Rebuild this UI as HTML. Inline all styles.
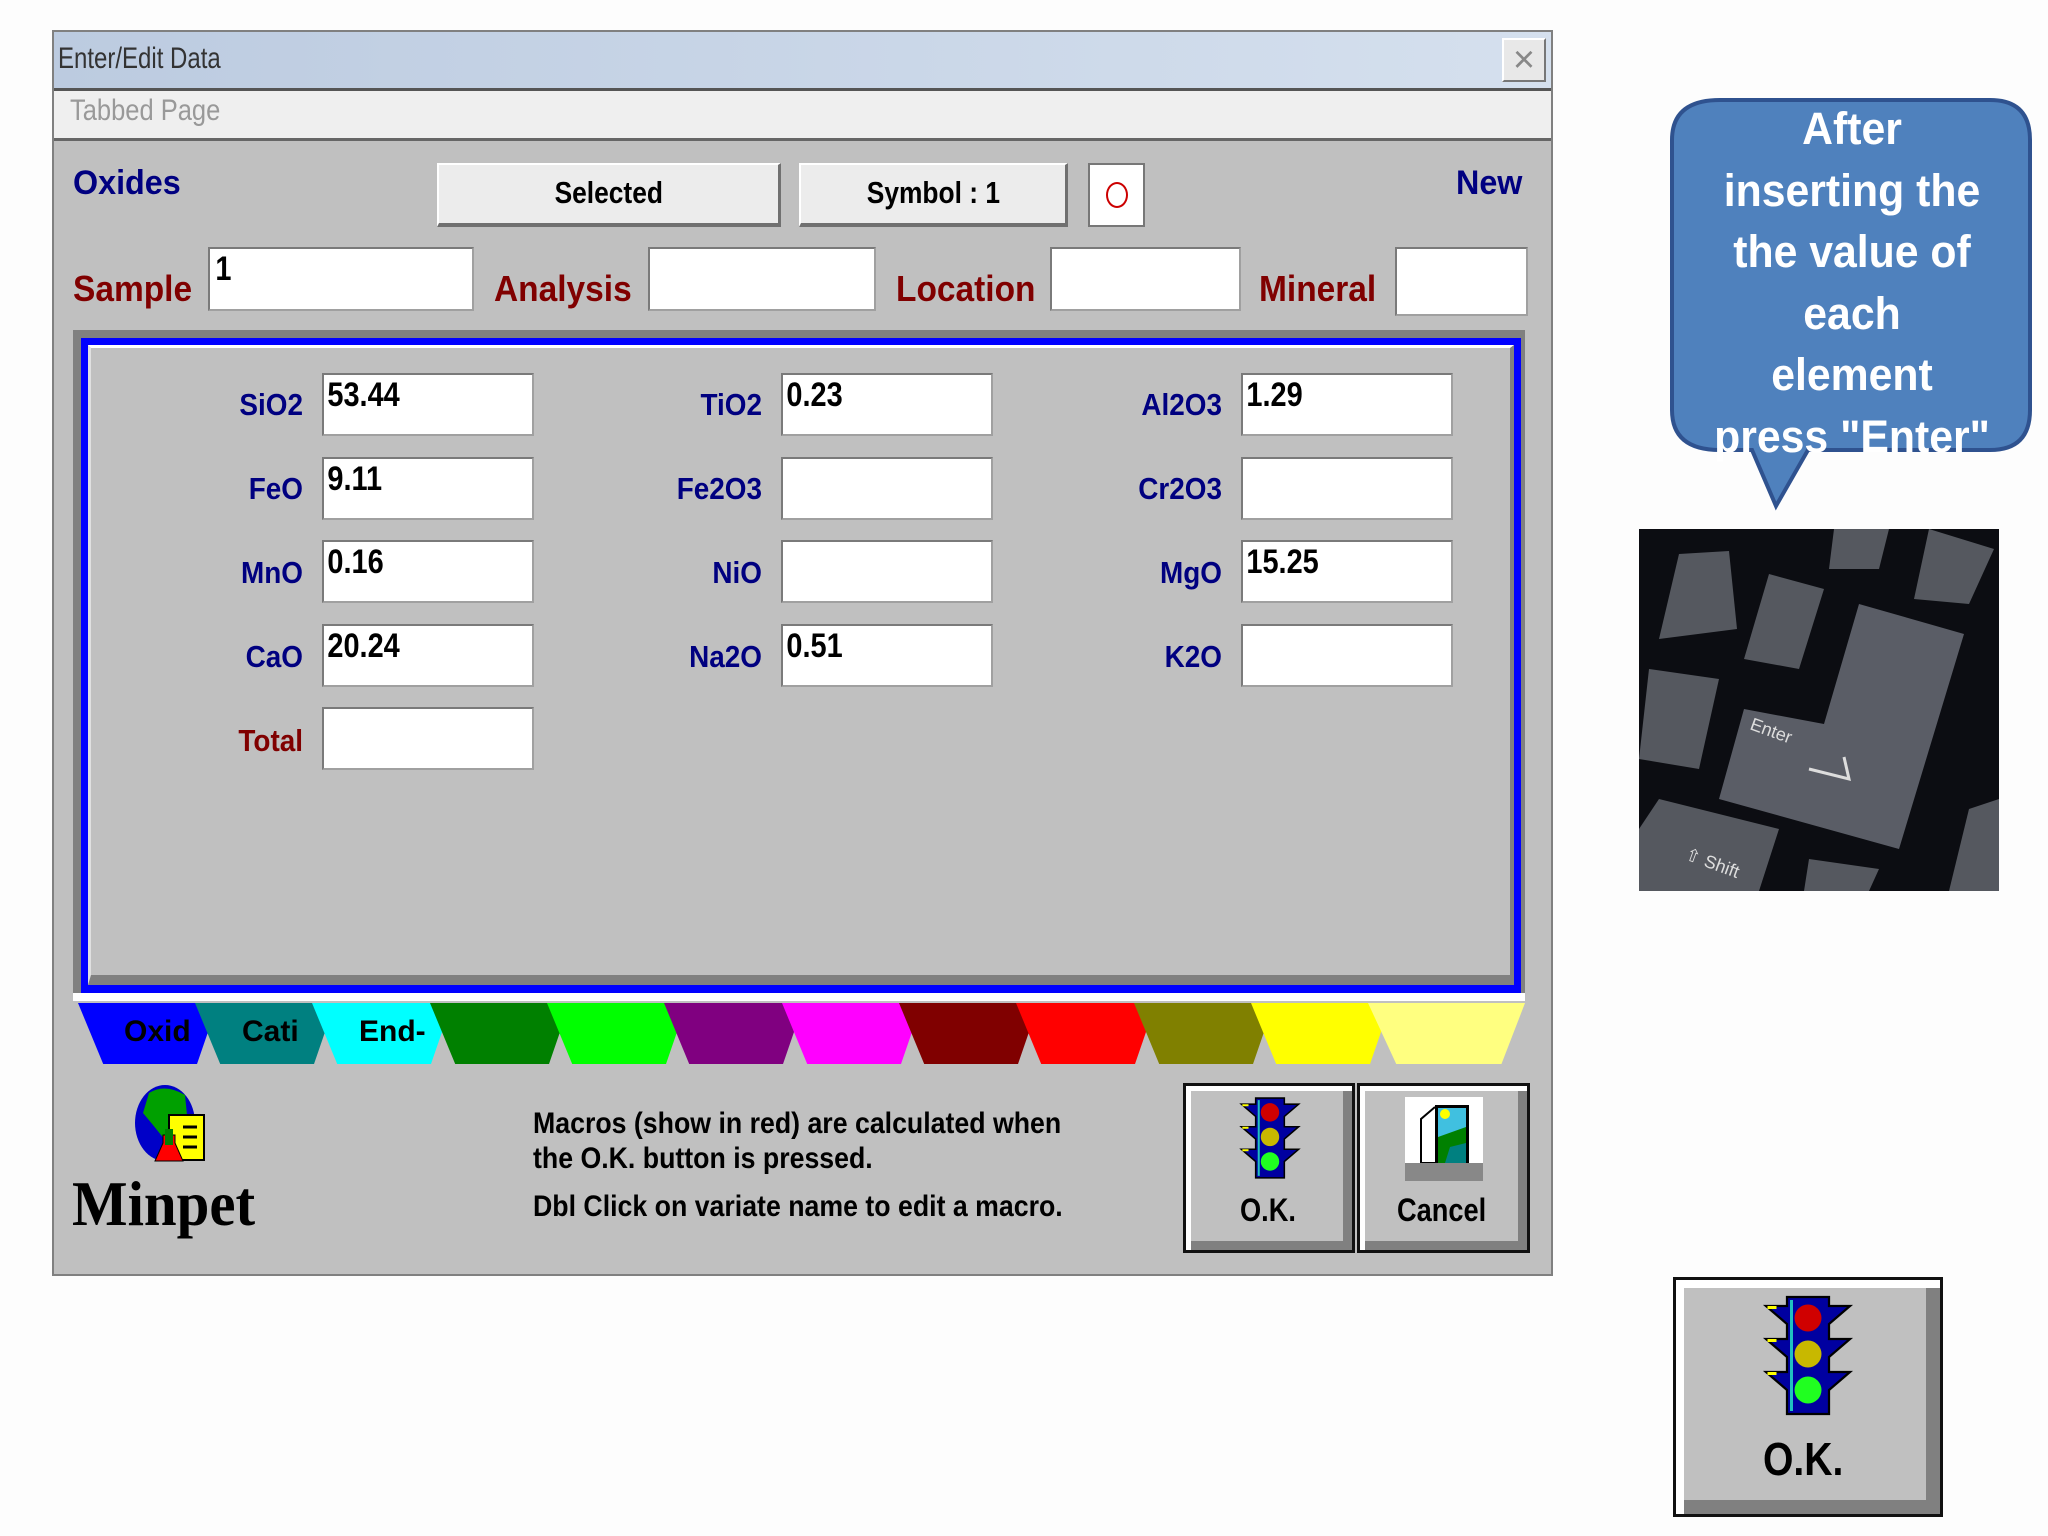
<!DOCTYPE html>
<html><head><meta charset="utf-8"><style>
*{margin:0;padding:0;box-sizing:border-box}
body{width:2048px;height:1536px;background:#fdfdfd;position:relative;overflow:hidden;font-family:"Liberation Sans",sans-serif}
.a{position:absolute}
.win{left:52px;top:30px;width:1501px;height:1246px;background:#c0c0c0;border:2px solid #808080}
.t{white-space:nowrap;font-family:"Liberation Sans",sans-serif;transform-origin:left center}
.in{background:#fff;border:2px solid #7a7a7a;border-right-color:#a0a0a0;border-bottom-color:#a0a0a0}
.btn{background:#ececec;border:2px solid #fff;border-right:3px solid #707070;border-bottom:4px solid #707070;text-align:center}
.lab{font-weight:bold;color:#000080;font-size:31px;text-align:right;width:160px;transform:scaleX(.9);transform-origin:right center}
.val{font-size:34px;font-weight:bold;padding-left:4px;line-height:40px;transform:scaleX(.85);transform-origin:left top}
.tab{top:1003px;height:61px;width:140px;clip-path:polygon(0 0,100% 0,85% 100%,18% 100%);font-size:30px;font-weight:bold;padding-left:46px;line-height:58px}
.bigbtn{background:#c0c0c0;border:3px solid #111;box-shadow:inset 5px 5px 0 #fff,inset -9px -9px 0 #808080}
.rl{font-size:36px;font-weight:bold;color:#800000;transform:scaleX(.93)}
</style></head><body>

<div class="a win"></div>
<div class="a" style="left:54px;top:32px;width:1497px;height:56px;background:linear-gradient(90deg,#bccbe0,#d5e0ee)"></div>
<div class="a t" style="left:58px;top:42px;font-size:30px;color:#333;transform:scaleX(.8)">Enter/Edit Data</div>
<div class="a" style="left:1502px;top:38px;width:44px;height:44px;background:#e8e8e8;border:2px solid #fff;border-right-color:#777;border-bottom-color:#777;color:#888;font-size:38px;line-height:40px;text-align:center">×</div>
<div class="a" style="left:54px;top:88px;width:1497px;height:3px;background:#555"></div>
<div class="a" style="left:54px;top:91px;width:1497px;height:48px;background:#efefef"></div>
<div class="a t" style="left:70px;top:94px;font-size:30px;color:#999;transform:scaleX(.85)">Tabbed Page</div>
<div class="a" style="left:54px;top:138px;width:1497px;height:3px;background:#666"></div>

<div class="a t" style="left:73px;top:164px;font-size:34px;color:#000080;font-weight:bold;transform:scaleX(.95)">Oxides</div>
<div class="a t" style="left:1456px;top:164px;font-size:34px;color:#000080;font-weight:bold;transform:scaleX(.95)">New</div>
<div class="a btn" style="left:437px;top:163px;width:344px;height:64px;font-size:31px;font-weight:bold;line-height:56px"><span style="display:inline-block;transform:scaleX(.85)">Selected</span></div>
<div class="a btn" style="left:799px;top:163px;width:269px;height:64px;font-size:31px;font-weight:bold;line-height:56px"><span style="display:inline-block;transform:scaleX(.85)">Symbol : 1</span></div>
<div class="a" style="left:1088px;top:163px;width:57px;height:64px;background:#fff;border:2px solid #777"><div class="a" style="left:16px;top:17px;width:22px;height:26px;border:2px solid #c00;border-radius:50%"></div></div>

<div class="a t rl" style="left:73px;top:268px">Sample</div>
<div class="a in" style="left:208px;top:247px;width:266px;height:64px"><span class="a val" style="left:2px;top:0">1</span></div>
<div class="a t rl" style="left:494px;top:268px">Analysis</div>
<div class="a in" style="left:648px;top:247px;width:228px;height:64px"></div>
<div class="a t rl" style="left:896px;top:268px">Location</div>
<div class="a in" style="left:1050px;top:247px;width:191px;height:64px"></div>
<div class="a t rl" style="left:1259px;top:268px">Mineral</div>
<div class="a in" style="left:1395px;top:247px;width:133px;height:69px"></div>

<div class="a" style="left:73px;top:330px;width:1452px;height:663px;background:#808080"></div>
<div class="a" style="left:81px;top:338px;width:1440px;height:655px;background:#0000ff"></div>
<div class="a" style="left:88px;top:345px;width:1426px;height:640px;background:#c0c0c0;border-top:3px solid #fff;border-left:3px solid #e0e0e0;border-bottom:10px solid #808080;border-right:4px solid #808080"></div>

<div class="a t lab" style="left:143px;top:387px">SiO2</div>
<div class="a in" style="left:322px;top:373px;width:212px;height:63px"><span class="a val">53.44</span></div>
<div class="a t lab" style="left:143px;top:471px">FeO</div>
<div class="a in" style="left:322px;top:457px;width:212px;height:63px"><span class="a val">9.11</span></div>
<div class="a t lab" style="left:143px;top:555px">MnO</div>
<div class="a in" style="left:322px;top:540px;width:212px;height:63px"><span class="a val">0.16</span></div>
<div class="a t lab" style="left:143px;top:639px">CaO</div>
<div class="a in" style="left:322px;top:624px;width:212px;height:63px"><span class="a val">20.24</span></div>
<div class="a t lab" style="left:143px;top:723px;color:#800000">Total</div>
<div class="a in" style="left:322px;top:707px;width:212px;height:63px"></div>
<div class="a t lab" style="left:602px;top:387px">TiO2</div>
<div class="a in" style="left:781px;top:373px;width:212px;height:63px"><span class="a val">0.23</span></div>
<div class="a t lab" style="left:602px;top:471px">Fe2O3</div>
<div class="a in" style="left:781px;top:457px;width:212px;height:63px"></div>
<div class="a t lab" style="left:602px;top:555px">NiO</div>
<div class="a in" style="left:781px;top:540px;width:212px;height:63px"></div>
<div class="a t lab" style="left:602px;top:639px">Na2O</div>
<div class="a in" style="left:781px;top:624px;width:212px;height:63px"><span class="a val">0.51</span></div>
<div class="a t lab" style="left:1062px;top:387px">Al2O3</div>
<div class="a in" style="left:1241px;top:373px;width:212px;height:63px"><span class="a val">1.29</span></div>
<div class="a t lab" style="left:1062px;top:471px">Cr2O3</div>
<div class="a in" style="left:1241px;top:457px;width:212px;height:63px"></div>
<div class="a t lab" style="left:1062px;top:555px">MgO</div>
<div class="a in" style="left:1241px;top:540px;width:212px;height:63px"><span class="a val">15.25</span></div>
<div class="a t lab" style="left:1062px;top:639px">K2O</div>
<div class="a in" style="left:1241px;top:624px;width:212px;height:63px"></div>

<div class="a" style="left:73px;top:993px;width:1452px;height:8px;background:#fff"></div>
<div class="a tab" style="left:78px;background:#0000ff">Oxid</div>
<div class="a tab" style="left:195px;background:#008080;padding-left:47px">Cati</div>
<div class="a tab" style="left:312px;background:#00ffff;padding-left:47px">End-</div>
<div class="a tab" style="left:430px;background:#008000"></div>
<div class="a tab" style="left:547px;background:#00ff00"></div>
<div class="a tab" style="left:664px;background:#800080"></div>
<div class="a tab" style="left:782px;background:#ff00ff"></div>
<div class="a tab" style="left:899px;background:#800000"></div>
<div class="a tab" style="left:1016px;background:#ff0000"></div>
<div class="a tab" style="left:1134px;background:#808000"></div>
<div class="a tab" style="left:1251px;background:#ffff00"></div>
<div class="a tab" style="left:1368px;width:157px;background:#ffff80"></div>

<svg class="a" style="left:135px;top:1085px" width="70" height="82" viewBox="0 0 70 82">
<ellipse cx="30" cy="38" rx="30" ry="38" fill="#0000c8"/>
<path d="M14 8 Q30 -2 50 10 L52 30 L40 36 L34 60 L26 50 L18 40 L8 28 Z" fill="#00a000"/>
<rect x="34" y="30" width="35" height="45" fill="#ffff00" stroke="#000" stroke-width="2"/>
<path d="M48 42h14M48 52h14M48 62h14" stroke="#000" stroke-width="3"/>
<path d="M28 50h12v8l8 18H20l8-18z" fill="#ff0000" stroke="#000" stroke-width="1"/>
<rect x="30" y="44" width="8" height="16" fill="#008000"/>
</svg>
<div class="a t" style="left:72px;top:1167px;font-family:'Liberation Serif',serif;font-weight:bold;font-size:64px;transform:scaleX(.92)">Minpet</div>

<div class="a t" style="left:533px;top:1106px;font-size:30px;font-weight:bold;line-height:35px;transform:scaleX(.89)">Macros (show in red) are calculated when<br>the O.K. button is pressed.</div>
<div class="a t" style="left:533px;top:1190px;font-size:30px;font-weight:bold;transform:scaleX(.89)">Dbl Click on variate name to edit a macro.</div>

<div class="a bigbtn" style="left:1183px;top:1083px;width:172px;height:170px"></div>
<svg class="a" style="left:1239px;top:1096px" width="62" height="86" viewBox="0 0 60 84"><use href="#tl"/></svg>
<div class="a t" style="left:1240px;top:1192px;font-size:32px;font-weight:bold;transform:scaleX(.85)">O.K.</div>
<div class="a bigbtn" style="left:1357px;top:1083px;width:173px;height:170px"></div>
<svg class="a" style="left:1405px;top:1097px" width="78" height="84" viewBox="0 0 78 84">
<rect width="78" height="70" fill="#fff"/>
<rect x="30" y="8" width="34" height="60" fill="#000"/>
<rect x="33" y="11" width="28" height="55" fill="#40c0e0"/>
<path d="M33 40 L61 30 L61 66 L33 66Z" fill="#008000"/>
<path d="M45 50 L61 46 L61 66 L40 66Z" fill="#008080"/>
<circle cx="40" cy="17" r="5" fill="#ffff00"/>
<path d="M30 10 L16 22 L16 66 L30 66" fill="#fff" stroke="#000" stroke-width="2"/>
<rect x="0" y="66" width="78" height="18" fill="#888"/>
</svg>
<div class="a t" style="left:1397px;top:1192px;font-size:32px;font-weight:bold;transform:scaleX(.85)">Cancel</div>

<svg class="a" style="left:1660px;top:90px" width="390" height="430">
<path d="M60 10 H330 Q370 10 370 50 V320 Q370 360 330 360 H148 L116 416 L92 360 H60 Q12 360 12 320 V50 Q12 10 60 10Z" fill="#4f81bd" stroke="#2f528f" stroke-width="4"/>
</svg>
<div class="a" style="left:1672px;top:98px;width:360px;text-align:center;color:#fff;font-weight:bold;font-size:45px;line-height:61.5px;transform:scaleX(.95)">After<br>inserting the<br>the value of<br>each<br>element<br>press "Enter"</div>

<svg class="a" style="left:1639px;top:529px" width="360" height="362" viewBox="0 0 360 362">
<rect width="360" height="362" fill="#0c0d12"/>
<g fill="#55585f">
<path d="M40 25 L90 22 L98 100 L20 110 Z"/>
<path d="M130 45 L185 60 L160 140 L105 130 Z"/>
<path d="M195 0 L250 0 L240 40 L190 40 Z"/>
<path d="M290 0 L355 20 L330 75 L275 70 Z"/>
<path d="M220 75 L325 105 L260 320 L80 270 L105 180 L185 195 Z" fill="#5a5d66"/>
<path d="M10 140 L80 150 L60 240 L0 230 Z"/>
<path d="M20 270 L140 300 L120 362 L0 362 L0 300 Z"/>
<path d="M170 330 L240 340 L230 362 L165 362Z"/>
<path d="M330 280 L360 270 L360 362 L310 362 Z"/>
</g>
<text x="110" y="200" fill="#ddd" font-size="18" transform="rotate(20 110 200)" font-family="Liberation Sans">Enter</text>
<path d="M170 240 L210 250 L205 228" stroke="#ddd" stroke-width="3" fill="none"/>
<text x="45" y="330" fill="#ddd" font-size="18" transform="rotate(20 45 330)" font-family="Liberation Sans">⇧ Shift</text>
</svg>

<div class="a bigbtn" style="left:1673px;top:1277px;width:270px;height:240px;box-shadow:inset 8px 8px 0 #fff,inset -14px -14px 0 #808080"></div>
<svg class="a" style="left:1760px;top:1294px" width="96" height="126" viewBox="0 0 60 84"><g id="tl">
<path d="M2 8 H16 V2 H44 V8 H58 L44 20 V30 H58 L44 42 V52 H58 L44 64 V80 H16 V64 L2 52 H16 V42 L2 30 H16 V20 Z" fill="#0000a0" stroke="#000" stroke-width="1.5"/>
<path d="M19 4 V78" stroke="#20c0c0" stroke-width="2"/>
<circle cx="30" cy="16" r="9" fill="#d00000"/>
<circle cx="30" cy="40" r="9" fill="#c8b800"/>
<circle cx="30" cy="64" r="9" fill="#20ff20"/>
<path d="M3 9h6M3 31h6M3 53h6" stroke="#ffff00" stroke-width="2"/>
</g></svg>
<div class="a t" style="left:1763px;top:1432px;font-size:46px;font-weight:bold;transform:scaleX(.85)">O.K.</div>
</body></html>
